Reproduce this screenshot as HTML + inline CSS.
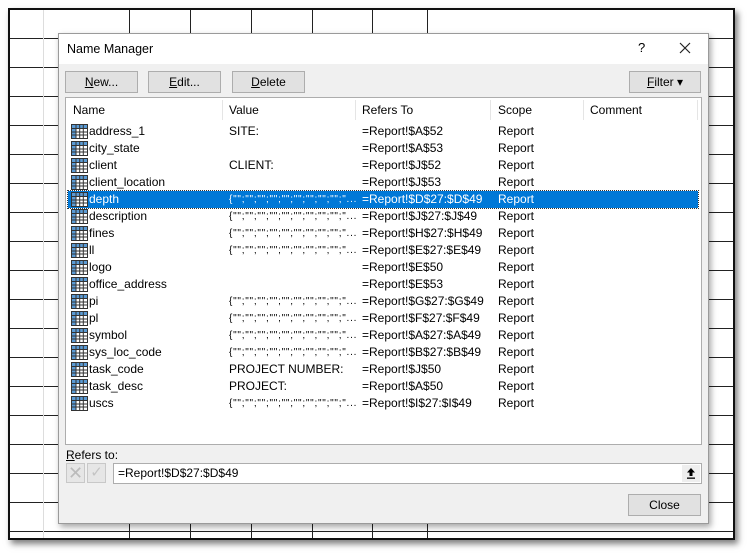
<!DOCTYPE html>
<html><head><meta charset="utf-8"><style>
*{margin:0;padding:0;box-sizing:border-box}
body{width:751px;height:556px;background:#fff;position:relative;overflow:hidden;font-family:"Liberation Sans",sans-serif;font-size:12px;color:#000}
.sheet{position:absolute;left:8px;top:8px;width:727px;height:532px;border:2px solid #111;box-shadow:3px 4px 6px rgba(0,0,0,.5);background:#fff;
background-image:repeating-linear-gradient(to bottom,transparent 0,transparent 28px,#222 28px,#222 29px);overflow:hidden}
.v{position:absolute;top:0;bottom:0;width:1px;background:#222}
.dlg{position:absolute;left:58px;top:33px;width:651px;height:491px;background:#f0f0f0;border:1px solid #9a9a9a;box-shadow:2px 3px 6px rgba(0,0,0,.35)}
.title{position:absolute;left:0;top:0;width:100%;height:30px;background:#fff}
.abs{position:absolute}
.btn{position:absolute;height:22px;background:#e1e1e1;border:1px solid #adadad;text-align:center;line-height:20px}
.list{position:absolute;left:6px;top:63px;width:637px;height:348px;background:#fff;border:1px solid #adadad}
.hdr{position:absolute;top:0;height:22px;line-height:24px}
.sep{position:absolute;top:2px;height:20px;width:1px;background:#e5e5e5}
.row{position:absolute;left:2px;width:630px;height:17px;line-height:17px}
.row span{position:absolute;top:0;white-space:nowrap}
.sel{background:#0078d7;color:#fff;outline:1px dotted #333}
.ic{position:absolute;left:3px;top:1px}
</style></head><body>
<div class="sheet">
<div class="v" style="left:33px;background:#ddd"></div>
<div class="v" style="left:119px"></div><div class="v" style="left:180px"></div><div class="v" style="left:241px"></div><div class="v" style="left:302px"></div><div class="v" style="left:362px"></div><div class="v" style="left:417px"></div>
</div>
<div class="dlg">
<div class="title"></div>
<div class="abs" style="left:8px;top:8px;font-size:12.5px">Name Manager</div>
<div class="abs" style="left:579px;top:6px;font-size:13px">?</div>
<svg class="abs" style="left:620px;top:8px" width="12" height="12" viewBox="0 0 12 12"><path d="M1 1L11 11M11 1L1 11" stroke="#222" stroke-width="1.2"/></svg>
<div class="btn" style="left:6px;top:37px;width:73px"><u>N</u>ew...</div>
<div class="btn" style="left:89px;top:37px;width:73px"><u>E</u>dit...</div>
<div class="btn" style="left:173px;top:37px;width:73px"><u>D</u>elete</div>
<div class="btn" style="left:570px;top:37px;width:72px"><u>F</u>ilter ▾</div>
<div class="list">
<div class="hdr" style="left:7px">Name</div><div class="sep" style="left:156px"></div>
<div class="hdr" style="left:163px">Value</div><div class="sep" style="left:289px"></div>
<div class="hdr" style="left:296px">Refers To</div><div class="sep" style="left:424px"></div>
<div class="hdr" style="left:432px">Scope</div><div class="sep" style="left:517px"></div>
<div class="hdr" style="left:524px">Comment</div><div class="sep" style="left:631px"></div>
<div id="rows"></div>
</div>
<div class="abs" style="left:7px;top:414px"><u>R</u>efers to:</div>
<div class="abs" style="left:7px;top:429px;width:19px;height:20px;border:1px solid #c8c8c8;background:#e6e6e6;color:#bbb;font-size:18px;line-height:18px;text-align:center">✕</div>
<div class="abs" style="left:28px;top:429px;width:19px;height:20px;border:1px solid #c8c8c8;background:#e6e6e6;color:#c4c4c4;font-size:15px;line-height:18px;text-align:center">✓</div>
<div class="abs" style="left:54px;top:429px;width:589px;height:21px;background:#fff;border:1px solid #adadad;line-height:19px;padding-left:4px">=Report!$D$27:$D$49</div>
<div class="abs" style="left:623px;top:431px;width:18px;height:17px;background:#eee"><svg width="18" height="17" viewBox="0 0 18 17"><path d="M9 3L5 7.5H7.5V11H10.5V7.5H13Z" fill="#000"/><rect x="5" y="12.5" width="8" height="1.3" fill="#000"/></svg></div>
<div class="btn" style="left:569px;top:460px;width:73px">Close</div>
</div>
<script>
var d=[["address_1","SITE:","=Report!$A$52"],["city_state","","=Report!$A$53"],["client","CLIENT:","=Report!$J$52"],["client_location","","=Report!$J$53"],["depth","V","=Report!$D$27:$D$49"],["description","V","=Report!$J$27:$J$49"],["fines","V","=Report!$H$27:$H$49"],["ll","V","=Report!$E$27:$E$49"],["logo","","=Report!$E$50"],["office_address","","=Report!$E$53"],["pi","V","=Report!$G$27:$G$49"],["pl","V","=Report!$F$27:$F$49"],["symbol","V","=Report!$A$27:$A$49"],["sys_loc_code","V","=Report!$B$27:$B$49"],["task_code","PROJECT NUMBER:","=Report!$J$50"],["task_desc","PROJECT:","=Report!$A$50"],["uscs","V","=Report!$I$27:$I$49"]];
var ic='<svg class="ic" width="17" height="15" viewBox="0 0 17 15"><rect x="0.5" y="0.5" width="16" height="14" fill="#fff" stroke="#333"/><rect x="1" y="1" width="15" height="3.5" fill="#5b9bd5"/><rect x="1" y="1" width="4" height="13" fill="#5b9bd5"/><path d="M1 4.5H16M1 8H16M1 11H16M5 1V14M8.7 1V14M12.3 1V14" stroke="#333" stroke-width="1" fill="none"/></svg>';
var h='';d.forEach(function(r,i){var V=r[1]=="V";var v=V?'{"";"";"";"";"";"";"";"";"";"...':r[1];
h+='<div class="row'+(i==4?' sel':'')+'" style="top:'+(25+i*17)+'px">'+ic+'<span style="left:21px">'+r[0]+'</span><span style="left:161px;'+(V?'font-size:10px;letter-spacing:0.75px':'')+'">'+v+'</span><span style="left:294px">'+r[2]+'</span><span style="left:430px">Report</span></div>';});
document.getElementById('rows').innerHTML=h;
</script>
</body></html>
